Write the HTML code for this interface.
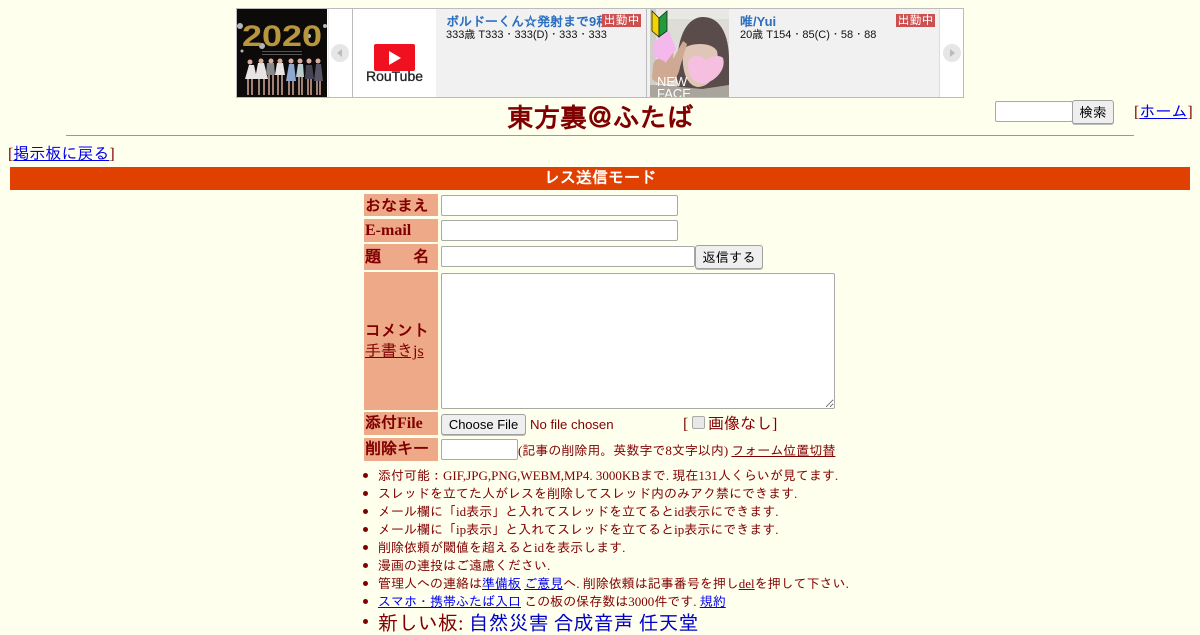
<!DOCTYPE html>
<html lang="ja"><head><meta charset="utf-8"><title>東方裏@ふたば</title>
<style>
html,body{margin:0;padding:0;width:1200px;height:630px;overflow:hidden;background:#ffffee;color:#800000;font-family:"Liberation Serif","IPAGothic",serif;font-size:16px}
.a{position:absolute;white-space:nowrap}
a{color:#0000ee}
.g{font-family:"Liberation Sans","IPAGothic",sans-serif}
.l{position:absolute;left:364px;width:74px;background:#eeaa88;font-weight:bold;overflow:hidden;white-space:nowrap}
input[type=text],textarea{position:absolute;box-sizing:border-box;margin:0;padding:1px 2px;border:1px solid #a9a9a9;border-radius:2px;background:#fff}
button{position:absolute;box-sizing:border-box;margin:0;padding:0;border:1px solid #a0a0a0;border-radius:3px;background:#efefef;color:#000;font:13.33px "Liberation Sans","IPAGothic",sans-serif;box-shadow:0 1px 0 #bbb}
.li{position:absolute;left:378px;font-size:13px;line-height:18px;white-space:nowrap}
.li:before{content:"";position:absolute;left:-15px;top:6px;width:5px;height:5px;border-radius:50%;background:#800000}
.bn{font:bold 13px "Liberation Sans","IPAGothic",sans-serif;color:#2a6fc0}
.st{font:11px "Liberation Sans","IPAGothic",sans-serif;color:#111}
.bd{position:absolute;background:#cc5050;color:#fff;font:12px/13px "Liberation Sans","IPAGothic",sans-serif;width:39px;height:13px;text-align:center}
</style></head><body>

<div class="a" style="left:236px;top:8px;width:726px;height:88px;border:1px solid #bbb;background:#fff"></div>
<svg class="a" style="left:237px;top:9px" width="90" height="88" viewBox="0 0 90 88">
<rect width="90" height="88" fill="#0d0a0a"/>
<g fill="#fff" opacity=".7"><circle cx="3" cy="17" r="3"/><circle cx="88" cy="17" r="2"/><circle cx="25" cy="37" r="3"/><circle cx="72" cy="27" r="2"/><circle cx="5" cy="42" r="1.5"/></g>
<text x="45" y="37" text-anchor="middle" font-family="Liberation Sans" font-size="30" font-weight="bold" fill="#b8963e" textLength="80" lengthAdjust="spacingAndGlyphs">2020</text>
<g fill="#555"><rect x="25" y="42" width="40" height="1"/><rect x="25" y="45" width="40" height="1"/></g>
<g fill="#e8e4e4"><path d="M8 70l4-14h5l3 14z"/><path d="M18 70l3-16h6l4 16z"/><path d="M29 66l1-12h7l1 12z" fill="#888"/><path d="M38 66l2-12h6l2 12z"/><path d="M49 72l3-17h5l2 17z" fill="#8fa8d0"/><path d="M59 68l2-13h5l1 13z" fill="#bcc"/><path d="M68 70l1-14h6l2 14z" fill="#445"/><path d="M77 72l2-17h5l2 17z" fill="#556"/></g>
<g fill="#d8b0a0"><circle cx="13" cy="53" r="2.5"/><circle cx="24" cy="52" r="2.5"/><circle cx="34" cy="52" r="2.5"/><circle cx="43" cy="52" r="2.5"/><circle cx="54" cy="52" r="2.5"/><circle cx="63" cy="52" r="2.5"/><circle cx="72" cy="52" r="2.5"/><circle cx="81" cy="52" r="2.5"/></g>
<g stroke="#c8a090" stroke-width="1.6"><path d="M11 70v16M15 70v16M22 70v16M27 70v16M32 66v20M36 66v20M41 66v20M45 66v20M52 72v14M56 72v14M62 68v18M65 68v18M71 70v16M74 70v16M80 72v14M83 72v14"/></g>
</svg>
<div class="a" style="left:352px;top:9px;width:1px;height:88px;background:#bbb"></div>
<div class="a" style="left:328px;top:9px;width:1px;height:88px;background:#eee"></div>
<svg class="a" style="left:331px;top:44px" width="18" height="18"><circle cx="9" cy="9" r="9" fill="#e6e6e6"/><path d="M11 5v8L6 9z" fill="#bbb"/></svg>

<div class="a" style="left:353px;top:9px;width:83px;height:88px;background:#fff"></div>
<div class="a" style="left:436px;top:9px;width:210px;height:88px;background:#f1f1f1"></div>
<svg class="a" style="left:374px;top:44px" width="42" height="28"><rect width="41" height="27" rx="2" fill="#f0101f"/><path d="M15 7l12 7-12 7z" fill="#fff"/></svg>
<div class="a g" style="left:353px;width:83px;text-align:center;top:69px;font-size:14px;line-height:15px;color:#222;-webkit-text-stroke:.3px #222">RouTube</div>
<div class="a bn" style="left:446px;top:14px;width:160px;overflow:hidden;line-height:15px">ボルドーくん☆発射まで9秒</div>
<div class="a st" style="left:446px;top:28px;line-height:14px">333歳 T333・333(D)・333・333</div>
<div class="bd" style="left:602px;top:14px">出勤中</div>

<div class="a" style="left:646px;top:9px;width:1px;height:88px;background:#bbb"></div>
<div class="a" style="left:647px;top:9px;width:292px;height:88px;background:#f1f1f1"></div>
<svg class="a" style="left:650px;top:9px" width="79" height="88" viewBox="0 0 79 88">
<rect width="79" height="88" fill="#dedcd6"/>
<rect x="0" y="0" width="6" height="88" fill="#cfd0c8"/>
<rect x="6" y="0" width="73" height="10" fill="#e8e8e4"/>
<path d="M28 88C24 50 28 10 52 8c18-1 27 18 27 42v38z" fill="#5a4c4a"/>
<path d="M33 40c6-6 28-8 34 2 3 14-2 34-18 36-12 0-18-16-16-38z" fill="#e0c6b6"/>
<path d="M3 56c2-8 9-8 13-2l3-18 5 1-1 13 10-18 4 3-7 23c-2 14-15 24-28 12z" fill="#cfa994"/>
<path d="M0 88V76c10 0 24 0 30 2l22 2 27-4v12z" fill="#a9a59c"/>
<path d="M38 58c-1-10 8-13 14-10 2 1 3 2 4 3 7-5 14-5 17-2 4 12-10 26-21 25-8 0-13-7-14-16z" fill="#f6bfe0"/>
<path d="M3 34l16-12 7 18-10 13-13-6z" fill="#f4b8ee"/>
<path d="M2 2l7 7v19l-7-6z" fill="#f2d400" stroke="#222" stroke-width=".8"/>
<path d="M17 2l-8 7v19l8-6z" fill="#1f9a3c" stroke="#222" stroke-width=".8"/>
<text x="7" y="77" font-family="Liberation Sans" font-size="13" fill="#fff">NEW</text>
<text x="7" y="89" font-family="Liberation Sans" font-size="13" fill="#fff">FACE</text>
</svg>
<div class="a bn" style="left:740px;top:14px;line-height:15px">唯/Yui</div>
<div class="a st" style="left:740px;top:28px;line-height:14px">20歳 T154・85(C)・58・88</div>
<div class="bd" style="left:896px;top:14px">出勤中</div>
<div class="a" style="left:939px;top:9px;width:1px;height:88px;background:#ddd"></div>
<svg class="a" style="left:943px;top:44px" width="18" height="18"><circle cx="9" cy="9" r="9" fill="#e6e6e6"/><path d="M7 5v8l5-4z" fill="#bbb"/></svg>

<div class="a" style="left:0;width:1200px;text-align:center;top:101px;font-size:26.6px;line-height:34px;font-weight:bold">東方裏＠ふたば</div>
<input type="text" style="left:995px;top:101px;width:78px;height:21px">
<button style="left:1072px;top:100px;width:42px;height:24px">検索</button>
<div class="a" style="left:1134px;top:104px;line-height:18px">[<a href="#">ホーム</a>]</div>
<div class="a" style="left:66px;top:135px;width:1068px;height:1px;background:#999"></div>
<div class="a" style="left:8px;top:146px;line-height:18px">[<a href="#">掲示板に戻る</a>]</div>
<div class="a" style="left:10px;top:167px;width:1180px;height:23px;background:#e04000;color:#fff;font-weight:bold;text-align:center;line-height:24px">レス送信モード</div>

<div class="l" style="top:194px;height:22px;line-height:25px;padding-left:1px;width:73px">おなまえ</div>
<div class="l" style="top:219px;height:23px;line-height:23px;padding-left:1px;width:73px">E-mail</div>
<div class="l" style="top:244px;height:26px;line-height:27px;padding-left:1px;width:73px">題　　名</div>
<div class="l" style="top:272px;height:138px"></div>
<div class="a" style="left:365px;top:322px;font-weight:bold;line-height:20px">コメント</div>
<div class="a" style="left:365px;top:342px;line-height:20px"><a href="#" style="color:#800000">手書きjs</a></div>
<div class="l" style="top:412px;height:23px;line-height:23px;padding-left:1px;width:73px">添付File</div>
<div class="l" style="top:438px;height:23px;line-height:24px;padding-left:1px;width:73px">削除キー</div>

<input type="text" style="left:441px;top:195px;width:237px;height:21px">
<input type="text" style="left:441px;top:220px;width:237px;height:21px">
<input type="text" style="left:441px;top:246px;width:254px;height:21px">
<button style="left:695px;top:245px;width:68px;height:24px">返信する</button>
<textarea style="left:441px;top:273px;width:394px;height:136px"></textarea>
<button style="left:441px;top:414px;width:85px;height:21px;font-size:13px">Choose File</button>
<div class="a g" style="left:530px;top:417px;font-size:13.2px;line-height:15px">No file chosen</div>
<div class="a" style="left:683px;top:415px;line-height:20px">[</div>
<div class="a" style="left:692px;top:416px;width:11px;height:11px;border:1px solid #aaa;border-radius:2px;background:#e8e8e8"></div>
<div class="a" style="left:708px;top:415px;line-height:20px">画像なし]</div>
<input type="text" style="left:441px;top:439px;width:77px;height:21px">
<div class="a" style="left:518px;top:442px;font-size:13px;line-height:18px">(記事の削除用。英数字で8文字以内) <a href="#" style="color:#800000">フォーム位置切替</a></div>

<div class="li" style="top:467px">添付可能：GIF,JPG,PNG,WEBM,MP4. 3000KBまで. 現在131人くらいが見てます.</div>
<div class="li" style="top:485px">スレッドを立てた人がレスを削除してスレッド内のみアク禁にできます.</div>
<div class="li" style="top:503px">メール欄に「id表示」と入れてスレッドを立てるとid表示にできます.</div>
<div class="li" style="top:521px">メール欄に「ip表示」と入れてスレッドを立てるとip表示にできます.</div>
<div class="li" style="top:539px">削除依頼が閾値を超えるとidを表示します.</div>
<div class="li" style="top:557px">漫画の連投はご遠慮ください.</div>
<div class="li" style="top:575px">管理人への連絡は<a href="#">準備板</a> <a href="#">ご意見</a>へ. 削除依頼は記事番号を押し<a href="#" style="color:#800000">del</a>を押して下さい.</div>
<div class="li" style="top:593px"><a href="#">スマホ・携帯ふたば入口</a> この板の保存数は3000件です. <a href="#">規約</a></div>
<div class="li" style="top:613px;font-size:20px;line-height:22px">新しい板: <a href="#" style="text-decoration:none;color:#0000cc">自然災害</a> <a href="#" style="text-decoration:none;color:#0000cc">合成音声</a> <a href="#" style="text-decoration:none;color:#0000cc">任天堂</a></div>
</body></html>
